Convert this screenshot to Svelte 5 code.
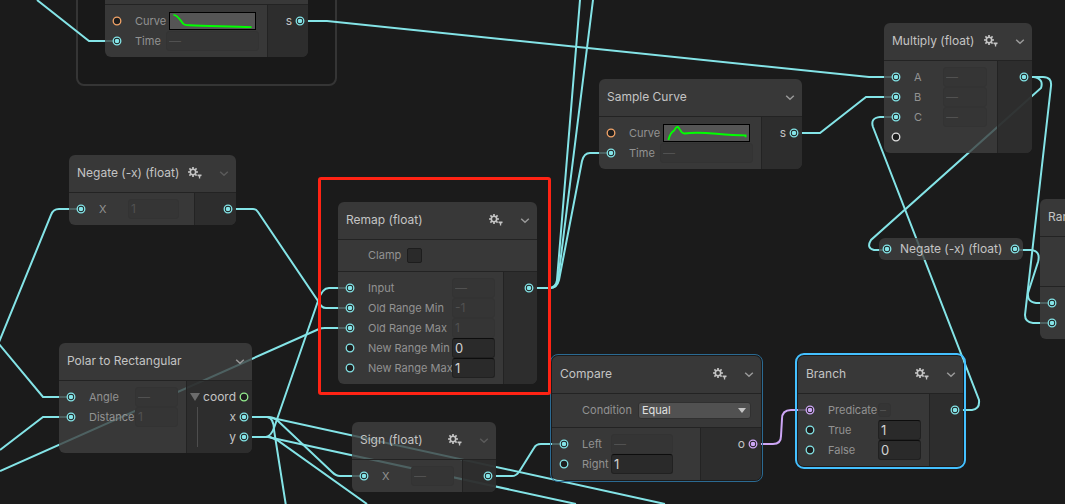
<script>
  const nodes = [
    { id: 'curve-a', x: 105, y: -33, w: 203, title: '', label: 31, field: 93, out: 41,
      inputs: [{ label: 'Curve', kind: 'curve', port: 'orange', d: 'M1 2 C5 2 7 6 11 11 Q12 13 18 13 C35 14 60 14 84 15' },
               { label: 'Time', value: '—', kind: 'off', port: 'on' }],
      outputs: [{ label: 's', port: 'on' }] },
    { id: 'negate', x: 69, y: 155, w: 167, title: 'Negate (-x) (float)', gear: true, dim: true, label: 29, field: 51, out: 42,
      inputs: [{ label: 'X', value: '1', kind: 'off', port: 'on' }], outputs: [{ label: '', port: 'on' }] },
    { id: 'polar', x: 59, y: 343, w: 193, title: 'Polar to Rectangular', label: 46, field: 43, out: 66, tree: true,
      inputs: [{ label: 'Angle', value: '—', kind: 'off', port: 'on' }, { label: 'Distance', value: '1', kind: 'off', port: 'on' }],
      outputs: [{ label: 'coord', port: 'green' }, { label: 'x', port: 'on' }, { label: 'y', port: 'on' }] },
    { id: 'remap', x: 338, y: 202, w: 199, title: 'Remap (float)', gear: true, setting: 'clamp', label: 84, field: 43, out: 34,
      inputs: [{ label: 'Input', value: '—', kind: 'off', port: 'on' }, { label: 'Old Range Min', value: '-1', kind: 'off', port: 'on' },
               { label: 'Old Range Max', value: '1', kind: 'off', port: 'on' }, { label: 'New Range Min', value: '0', kind: 'edit', port: 'open' },
               { label: 'New Range Max', value: '1', kind: 'edit', port: 'open' }],
      outputs: [{ label: '', port: 'on' }] },
    { id: 'sign', x: 352, y: 422, w: 144, title: 'Sign (float)', gear: true, dim: true, label: 29, field: 43, out: 34,
      inputs: [{ label: 'X', value: '—', kind: 'off', port: 'on' }], outputs: [{ label: '', port: 'on' }] },
    { id: 'compare', x: 552, y: 356, w: 209, title: 'Compare', gear: true, setting: 'condition', ring: 'hover', label: 29, field: 62, out: 61,
      inputs: [{ label: 'Left', value: '—', kind: 'off', port: 'on' }, { label: 'Right', value: '1', kind: 'edit', port: 'open' }],
      outputs: [{ label: 'o', port: 'purple on' }] },
    { id: 'branch', x: 798, y: 356, w: 165, title: 'Branch', gear: true, ring: 'selected', label: 50, field: 43, out: 34,
      inputs: [{ label: 'Predicate', value: '–', kind: 'off', port: 'purple on', small: true }, { label: 'True', value: '1', kind: 'edit', port: 'open' },
               { label: 'False', value: '0', kind: 'edit', port: 'open' }],
      outputs: [{ label: '', port: 'on' }] },
    { id: 'curve-b', x: 599, y: 79, w: 203, title: 'Sample Curve', label: 31, field: 93, out: 41,
      inputs: [{ label: 'Curve', kind: 'curve', port: 'orange', d: 'M2 16 C4 8 6 7 8 6 C10 2 11 2 12 2 C14 3 15 9 19 9 C40 6 55 11 84 11 V13' },
               { label: 'Time', value: '—', kind: 'off', port: 'on' }],
      outputs: [{ label: 's', port: 'on' }] },
    { id: 'multiply', x: 884, y: 23, w: 148, title: 'Multiply (float)', gear: true, label: 29, field: 44, out: 35,
      inputs: [{ label: 'A', value: '—', kind: 'off', port: 'on' }, { label: 'B', value: '—', kind: 'off', port: 'on' },
               { label: 'C', value: '—', kind: 'off', port: 'on' }, { label: '', kind: 'none', port: 'white' }],
      outputs: [{ label: '', port: 'on' }] },
    { id: 'random', x: 1040, y: 199, w: 180, title: 'Random', setting: 'blank', label: 60, field: 43, out: 34,
      inputs: [{ label: '', kind: 'none', port: 'on' }, { label: '', kind: 'none', port: 'on' }], outputs: [] },
  ];

  const wires = [
    'M37 0 L89 41 H117',
    'M300 21 H327 L869 77 H896',
    'M-1 342 L51 215 Q53 209 59 209 H81',
    'M-1 344 L43 397 H71',
    'M0 450 L43 417 H71',
    'M0 471 L319 329 Q321 328 325 328 H350',
    'M228 209 H253 Q256 209 258 212 L318 301 Q321 308 326 308 H350',
    'M244 437 H266 Q271 436 274 428 L318 301 Q322 288 329 288 H350',
    'M244 417 H267 Q274 418 274 430 L286 506',
    'M244 417 H268 L665 504',
    'M244 437 H268 L576 504',
    'M244 417 H268 Q273 417 277 420 L332 472 Q336 476 340 476 H364',
    'M244 437 H270 L277 440 L367 504',
    'M488 476 H512 Q516 476 519 472 L534 448 Q536 444 541 444 H564',
    'M529 288 H548 Q556 288 557 280 L580 0',
    'M529 288 H550 Q557 288 558 280 L593 0',
    'M529 288 H550 Q557 288 559 280 L582 161 Q584 153 590 153 H611',
    'M794 133 H820 L866 97 H896',
    'M955 410 H972 Q980 409 979 400 L873 127 Q870 118 880 117 H896',
    'M1024 77 H1034 Q1044 79 1041 88 L871 240 Q866 248 874 250 H887',
    'M1024 77 H1043 Q1052 77 1051 86 L1025 315 Q1025 322 1033 323 H1052',
    'M1015 250 H1031 Q1041 251 1038 262 L1028 293 Q1027 302 1036 303 H1052',
  ];
</script>

{#snippet socket(kind)}
  <svg class="port {kind}" width="10" height="10" viewBox="0 0 10 10" aria-hidden="true">
    <circle class="ring" cx="5" cy="5" r="3.800" />
    <circle class="dot" cx="5" cy="5" r="2.300" />
  </svg>
{/snippet}

<main class="graph">
  <div class="group"></div>
  <svg class="wires" aria-hidden="true">
    {#each wires as d}<path {d} />{/each}
    <path class="bool" d="M753 444 H773 Q781 444 781 436 L782 419 Q782 410 791 410 H810" />
  </svg>

  {#each nodes as n (n.id)}
    <section class="node {n.ring ?? ''}" class:dim={n.dim} style="left:{n.x}px;top:{n.y}px;width:{n.w}px">
      <header>
        <h2>{n.title}</h2>
        {#if n.gear}
          <button class="icon gear" aria-label="Options">
            <svg width="14" height="12" viewBox="0 0 14 12">
              <circle cx="5" cy="5" r="2.700" fill="none" stroke="currentColor" stroke-width="1.600" />
              <path fill="none" stroke="currentColor" stroke-width="1.700" d="M5 0V2M5 8V10M0 5H2M8 5H10M1.400 1.400L3 3M7 7L8.600 8.600M1.400 8.600L3 7M7 3L8.600 1.400" />
              <path fill="currentColor" d="M9.500 7.500H13.500V9L12.200 9.500V11.500H10.900V9.500L9.500 9Z" />
            </svg>
          </button>
        {/if}
        <button class="icon fold" aria-label="Collapse">
          <svg width="10" height="8" viewBox="0 0 10 8"><path d="M1.200 2.800L5 6.300L8.800 2.800" fill="none" stroke="currentColor" stroke-width="1.500" /></svg>
        </button>
      </header>

      {#if n.setting === 'clamp'}
        <div class="setting"><label for="clamp">Clamp</label><input id="clamp" type="checkbox" /></div>
      {:else if n.setting === 'condition'}
        <div class="setting">
          <label for="condition">Condition</label>
          <span class="pick"><select id="condition"><option>Equal</option></select></span>
        </div>
      {:else if n.setting}
        <div class="setting blank"></div>
      {/if}

      <div class="body">
        <div class="inputs">
          {#each n.inputs as p, i}
            <div class="row">
              {@render socket(p.port)}
              <label for="{n.id}-{i}" style="width:{n.label}px">{p.label}</label>
              {#if p.kind === 'curve'}
                <button id="{n.id}-{i}" class="swatch" aria-label="Edit curve">
                  <svg width="85" height="16" viewBox="0 0 85 17"><path d={p.d} /></svg>
                </button>
              {:else if p.kind !== 'none'}
                <input id="{n.id}-{i}" class={p.kind} type="text" value={p.value} disabled={p.kind === 'off'}
                  class:small={p.small} style="width:{p.small ? 13 : n.field}px" />
              {/if}
            </div>
          {/each}
        </div>
        <div class="outputs" class:tree={n.tree} style="width:{n.out}px">
          {#each n.outputs as p, i}
            <div class="row">
              {#if n.tree && i === 0}<svg class="tri" width="10" height="8" viewBox="0 0 10 8"><path d="M0 0H10L5 8Z" fill="#6c6c6c" /></svg>{/if}
              <span>{p.label}</span>{@render socket(p.port)}
            </div>
          {/each}
        </div>
      </div>
    </section>
  {/each}

  <section class="pill">
    {@render socket('on')}<h2>Negate (-x) (float)</h2>{@render socket('on')}
  </section>

  <div class="marker"></div>
</main>

<style>
  :global(body) { margin: 0; background: #1b1b1b; }
  .graph {
    position: relative;
    min-height: 100vh;
    overflow: hidden;
    background: #1b1b1b;
    color: #c4c4c4;
    font: 11px/20px Inter, "Liberation Sans", sans-serif;
  }
  .graph * { box-sizing: border-box; }
  .group {
    position: absolute; left: 76px; top: -40px; width: 261px; height: 126px;
    border: 2px solid #353535; border-radius: 8px; background: #191919;
  }
  .wires { position: absolute; inset: 0; width: 100%; height: 100%; }
  .wires path { fill: none; stroke: #84e4e7; stroke-width: 2; }
  .wires .bool { stroke: #cda6f5; }

  .node {
    position: absolute; border-radius: 6px;
    background: rgba(64, 64, 64, 0.8);
  }
  .node.hover { outline: 1px solid #2b6a92; outline-offset: 1px; }
  .node.selected { outline: 2px solid #44c0ff; outline-offset: 1px; }
  header {
    display: flex; align-items: center; height: 38px; padding: 0 7px 1px 8px;
    border-bottom: 1px solid #232323;
  }
  h2 { margin: 0; font-size: 12px; font-weight: 400; line-height: 20px; white-space: nowrap; color: #c4c4c4; }
  header h2 { flex: 1; }
  button { padding: 0; border: 0; background: none; color: #c4c4c4; }
  .icon { display: block; line-height: 0; flex: none; }
  .icon svg { display: block; }
  .gear { margin-right: 17px; }
  .fold { color: #999; }
  .dim .fold { color: #5a5a5a; }

  .setting {
    display: flex; align-items: center; gap: 6px; padding: 8px 10px 8px 30px;
    border-bottom: 1px solid #232323; color: #929292;
  }
  .setting label { line-height: 15px; }
  .setting.blank { height: 50px; }
  input[type="checkbox"] {
    appearance: none; margin: 0; width: 15px; height: 15px;
    background: #2a2a2a; border: 1px solid #1d1d1d; border-radius: 2px;
  }
  .pick { flex: 1; position: relative; display: flex; }
  .pick::after {
    content: ""; position: absolute; right: 5px; top: 6px;
    border: 4px solid transparent; border-top: 5px solid #c4c4c4; border-bottom: 0;
    pointer-events: none;
  }
  select {
    appearance: none; flex: 1; height: 17px; padding: 0 3px; font: inherit; line-height: 15px;
    color: #e0e0e0; background: #515151; border: 1px solid #303030; border-radius: 3px;
  }

  .body { display: flex; }
  .inputs { flex: 1; min-width: 0; padding: 6px 0 6px 7px; }
  .outputs { flex: none; padding: 6px 3px 6px 0; border-left: 1px solid #232323; background: rgba(43, 43, 43, 0.8); border-bottom-right-radius: 6px; }
  .row { display: flex; align-items: center; height: 20px; }
  .row label { flex: none; margin-left: 13px; white-space: nowrap; color: #929292; }
  .outputs .row { justify-content: flex-end; gap: 3px; }
  .outputs span { font-size: 12px; }
  .tree { background-image: linear-gradient(#4d4d4d, #4d4d4d); background-size: 1px 40px; background-position: 10px 26px; background-repeat: no-repeat; }

  .port { flex: none; display: block; color: #84e4e7; }
  .ring { fill: #1e1e1e; stroke: currentColor; stroke-width: 1.3px; }
  .dot { fill: none; }
  .on .dot { fill: currentColor; }
  .purple { color: #cda6f5; }
  .orange { color: #f3a468; }
  .green { color: #95ee8f; }
  .white { color: #e0e0e0; }

  .row input {
    height: 20px; padding: 0 2px; border: 1px solid transparent; border-radius: 3px; font: inherit; min-width: 0;
  }
  .row .off { color: #515151; background: #353535; border-color: #333; font-size: 12px; }
  .row .small { height: 14px; padding: 0 1px; }
  .row .edit { color: #d2d2d2; background: #2a2a2a; border-color: #0d0d0d #212121 #212121; font-size: 13px; }
  .swatch { margin-left: 3px; border: 1px solid #000; background: #555; line-height: 0; }
  .swatch path { fill: none; stroke: #00ff00; stroke-width: 2; }

  .pill {
    position: absolute; left: 879px; top: 238px; display: flex; align-items: center; gap: 8px;
    height: 22px; padding: 0 3px; border-radius: 6px; background: rgba(64, 64, 64, 0.8);
  }
  .marker {
    position: absolute; left: 318px; top: 177px; width: 233px; height: 218px;
    border: 3px solid #ff2314; border-radius: 3px; pointer-events: none;
  }
</style>
